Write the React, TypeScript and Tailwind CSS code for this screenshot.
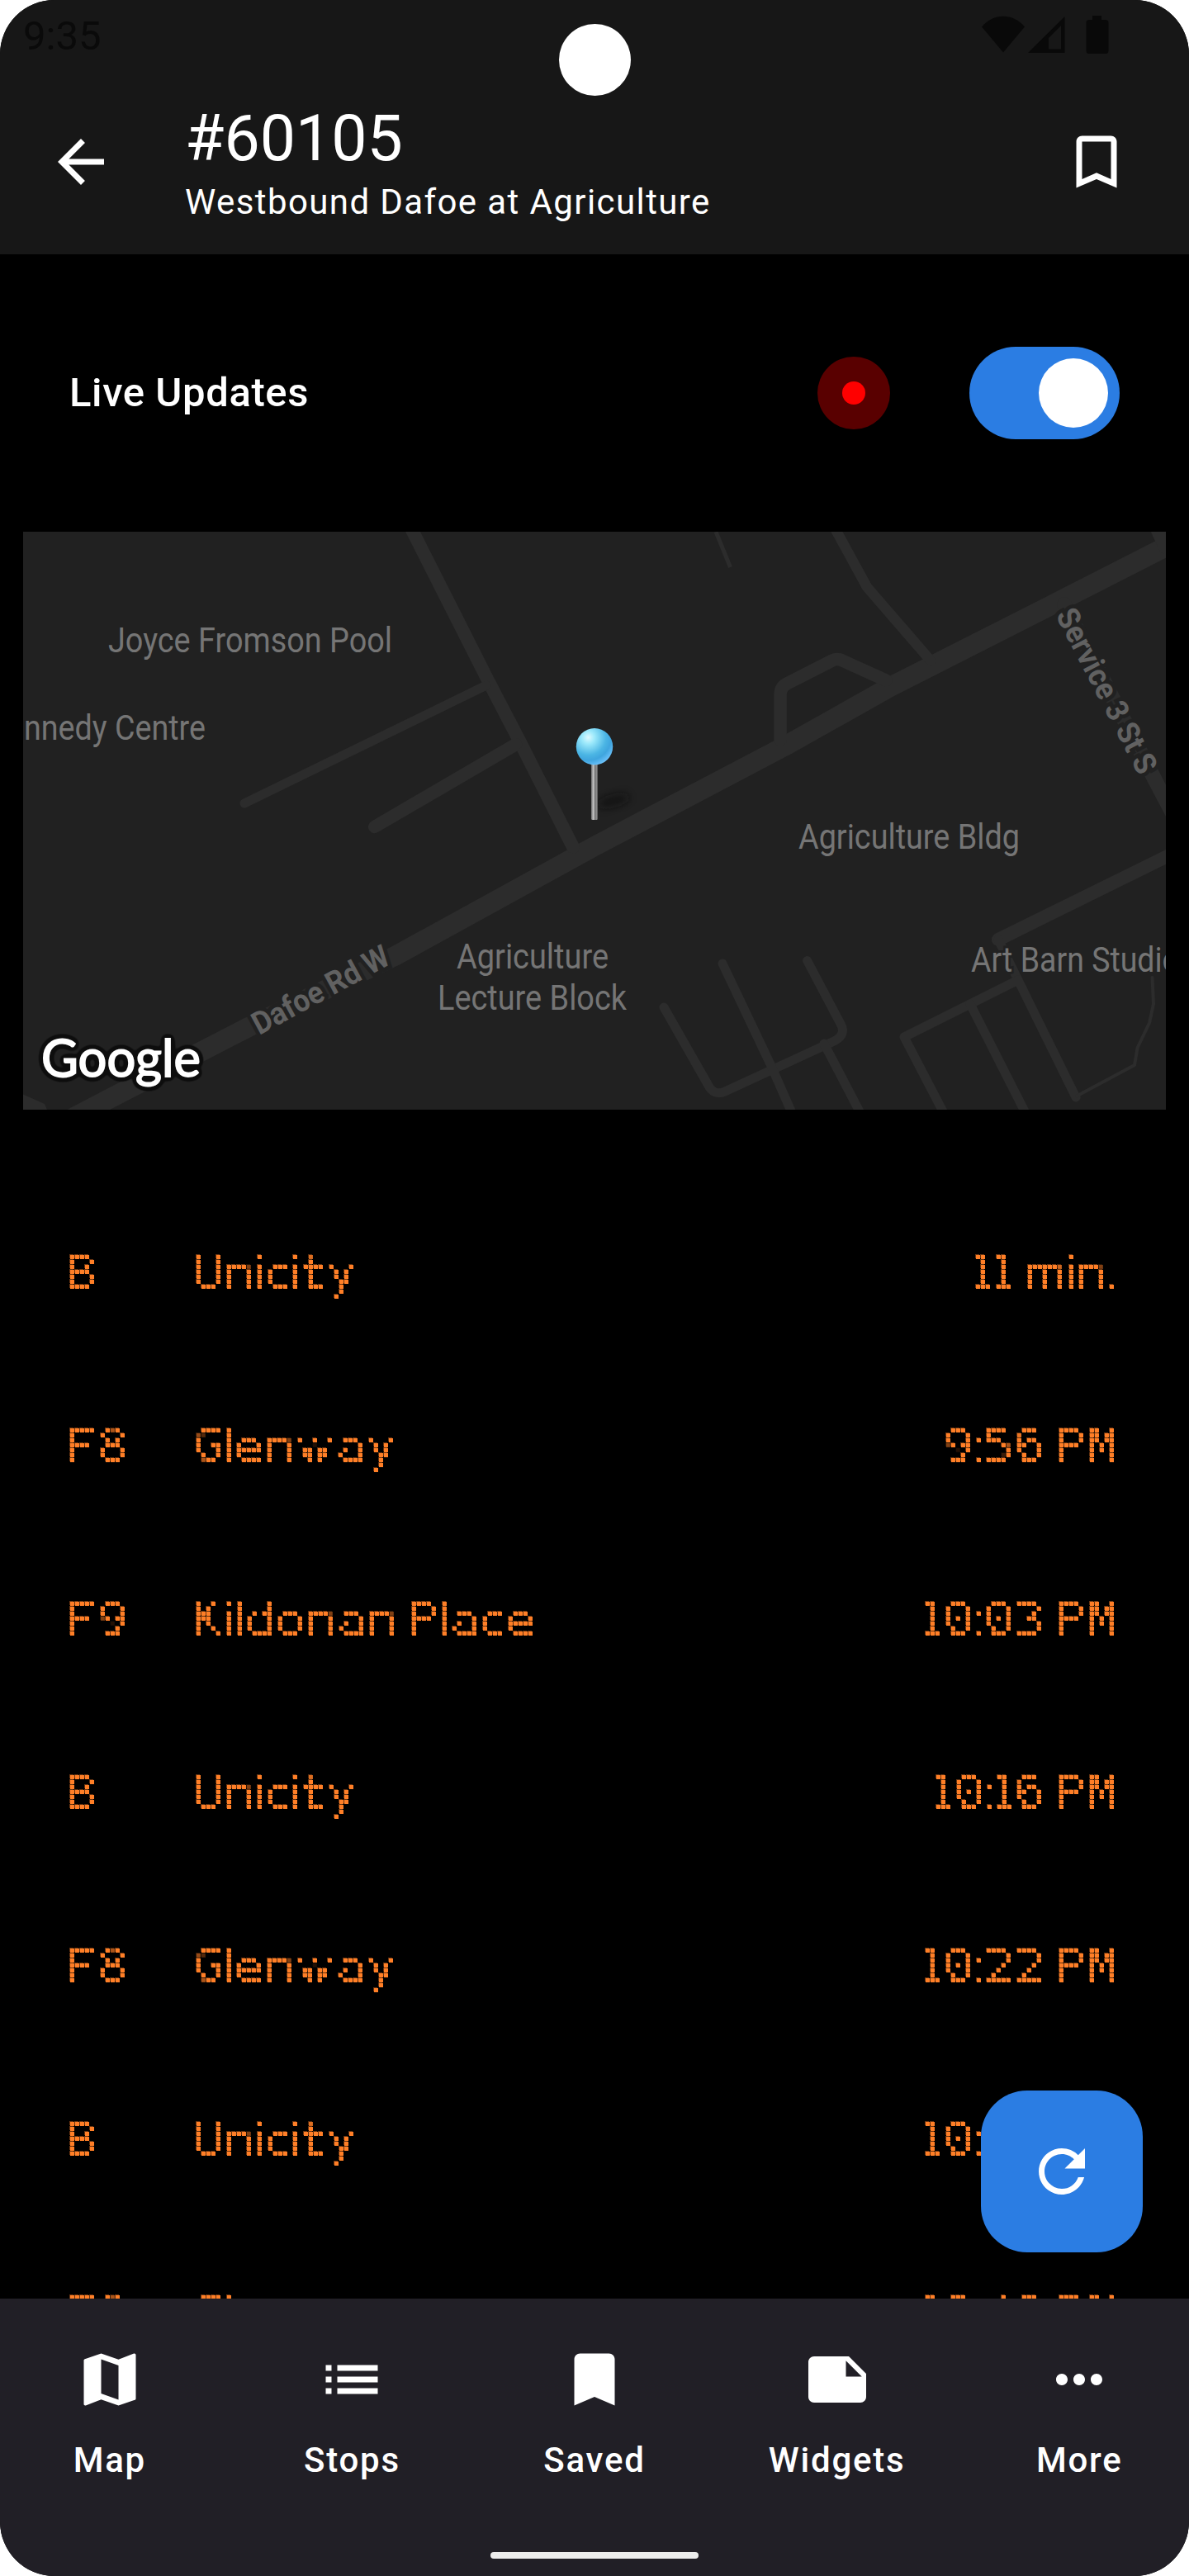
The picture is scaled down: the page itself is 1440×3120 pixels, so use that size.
import { useMemo } from "react";
import type { ReactNode } from "react";
import {
  MdArrowBack,
  MdBookmark,
  MdBookmarkBorder,
  MdList,
  MdMap,
  MdMoreHoriz,
  MdNote,
  MdRefresh,
} from "react-icons/md";

/* ---------- LED sign text ---------- */

const DOT = 6; // cell size of one lamp
const PITCH = 6.15; // average advance of one column
const LED_SIZE = 57.6; // cap height of seven lamps

type Face = "mono" | "sans" | "round" | "thinMono";

const FACES: Record<Face, { font: string; className: string }> = {
  mono: { font: `${LED_SIZE}px "DejaVu Sans Mono"`, className: "font-['DejaVu_Sans_Mono',monospace]" },
  sans: { font: `${LED_SIZE}px "DejaVu Sans"`, className: "font-['DejaVu_Sans',sans-serif]" },
  round: { font: `${LED_SIZE}px Inter`, className: "font-[Inter,sans-serif]" },
  thinMono: { font: `${LED_SIZE}px "Liberation Mono"`, className: "font-['Liberation_Mono',monospace]" },
};

// [advance in dots, inked dots, face]
const LED_METRICS: Record<string, [number, number, Face]> = {
  " ": [2.3, 1, "mono"],
  i: [2.1, 1, "sans"],
  l: [2, 1, "sans"],
  ":": [2, 1, "sans"],
  ".": [2, 1, "sans"],
  c: [5, 4, "mono"],
  t: [5, 4, "sans"],
  w: [8, 7, "round"],
  m: [8, 7, "sans"],
  M: [6, 5, "thinMono"],
  "1": [4, 3, "mono"],
};

// Samples the text once per cell and grows every lit sample to a square lamp.
function LedFilter() {
  return (
    <svg className="absolute size-0" aria-hidden="true">
      <filter
        id="led"
        filterUnits="userSpaceOnUse"
        primitiveUnits="userSpaceOnUse"
        x="-6"
        y="0"
        width="72"
        height="72"
        colorInterpolationFilters="sRGB"
      >
        <feFlood x="3" y="3" width="1" height="1" floodColor="#000" result="point" />
        <feComposite in="point" in2="point" operator="over" x="0" y="0" width="6" height="6" result="cell" />
        <feTile in="cell" result="grid" />
        <feGaussianBlur in="SourceGraphic" stdDeviation="1.1" result="smooth" />
        <feComposite in="smooth" in2="grid" operator="in" result="samples" />
        <feComponentTransfer in="samples" result="lit">
          <feFuncA type="linear" slope="20" intercept="-9" />
        </feComponentTransfer>
        <feMorphology in="lit" operator="dilate" radius="2" result="squares" />
        <feFlood floodColor="#ff7f27" result="orange" />
        <feComposite in="orange" in2="squares" operator="in" result="lamps" />
        <feOffset in="lamps" dx="-1" dy="-1" result="moved" />
        <feComponentTransfer in="moved" result="glow">
          <feFuncA type="linear" slope="0.4" />
        </feComponentTransfer>
        <feMerge>
          <feMergeNode in="glow" />
          <feMergeNode in="lamps" />
        </feMerge>
      </filter>
    </svg>
  );
}

function LedText({ text }: { text: string }) {
  const glyphs = useMemo(() => {
    const ctx = document.createElement("canvas").getContext("2d")!;
    let x = 0;
    return Array.from(text).map((ch) => {
      const [adv, ink, face] = LED_METRICS[ch] ?? [6, 5, "mono" as Face];
      const start = Math.round(x);
      x += adv * PITCH;
      const width = Math.round(x) - start;
      if (ch === " ") return { ch, width, face, style: {} };
      ctx.font = FACES[face].font;
      const m = ctx.measureText(ch);
      const base = (72 - m.fontBoundingBoxAscent - m.fontBoundingBoxDescent) / 2 + m.fontBoundingBoxAscent;
      const sx = (ink * DOT - 1) / (m.actualBoundingBoxRight + m.actualBoundingBoxLeft);
      const shift = 1 + m.actualBoundingBoxLeft * sx;
      let sy = "acemnoty".includes(ch) ? 0.95 : 1;
      if (face === "round") sy = 30 / m.actualBoundingBoxAscent;
      if (face === "thinMono") sy = 42 / m.actualBoundingBoxAscent;
      return {
        ch,
        width,
        face,
        style: {
          transformOrigin: `0 ${base}px`,
          transform: `translate(${shift}px, ${54.3 - base}px) scale(${sx}, ${sy})`,
        },
      };
    });
  }, [text]);

  return (
    <span className="flex h-[72px] text-[57.6px] leading-[72px] whitespace-pre text-[#ff7f27]">
      {glyphs.map((g, i) => (
        <span key={i} className="block h-[72px] shrink-0 [filter:url(#led)]" style={{ width: g.width }}>
          <span className={`inline-block align-top ${FACES[g.face].className}`} style={g.style}>
            {g.ch}
          </span>
        </span>
      ))}
    </span>
  );
}

/* ---------- Header ---------- */

function StatusIcons() {
  return (
    <svg width="156" height="48" viewBox="0 0 156 48" fill="#090909">
      <path d="M1 13.500C15-3.500 39-3.500 53 13.500L27 44.500Z" />
      <path fillRule="evenodd" d="M57 45L101.500 1V45ZM97 12L82 27V40.500H97Z" />
      <path d="M135 0h11v5h5a3.500 3.500 0 0 1 3.500 3.500v34a3.500 3.500 0 0 1-3.500 3.500h-20a3.500 3.500 0 0 1-3.500-3.500v-34a3.500 3.500 0 0 1 3.500-3.500h4z" />
    </svg>
  );
}

function Header() {
  return (
    <header className="relative h-[308px] shrink-0 bg-[#171717] text-white">
      <div className="flex h-[88px] items-start justify-between pr-[96px] pl-7 text-[#0a0a0a]">
        <span className="pt-[15px] text-[49px] leading-[57px]">9:35</span>
        <span className="pt-[19px]">
          <StatusIcons />
        </span>
      </div>
      <div className="absolute top-[29px] left-[677px] size-[87px] rounded-full bg-white" />
      <div className="flex h-[216px] items-center pr-[70px] pl-14">
        <MdArrowBack size={84} />
        <div className="ml-[84px] flex-1">
          <h1 className="mt-0.5 text-[77px] leading-[94px]">#60105</h1>
          <p className="mt-0.5 text-[42px] leading-[56px] tracking-[1.4px]">
            Westbound Dafoe at Agriculture
          </p>
        </div>
        <MdBookmarkBorder size={84} />
      </div>
    </header>
  );
}

/* ---------- Live updates ---------- */

function LiveUpdates() {
  return (
    <section className="flex h-[336px] shrink-0 items-center px-[84px]">
      <span className="flex-1 text-[49px] font-medium tracking-[0.6px] text-white">Live Updates</span>
      <span className="mr-24 flex size-[88px] items-center justify-center rounded-full bg-[#590000]">
        <span className="size-7 rounded-full bg-[#ff0000]" />
      </span>
      <span className="flex h-28 w-[182px] items-center justify-end rounded-full bg-[#2b7de3] pr-3.5">
        <span className="size-[84px] rounded-full bg-white" />
      </span>
    </section>
  );
}

/* ---------- Map ---------- */

function MapView() {
  const label = {
    fontSize: 42,
    fill: "#757575",
    stroke: "#212121",
    strokeWidth: 6,
    paintOrder: "stroke",
    lengthAdjust: "spacingAndGlyphs" as const,
  };
  const street = { ...label, fontSize: 38, fontWeight: 700, fill: "#616161", strokeWidth: 10 };
  return (
    <svg className="mx-7 h-[700px] w-[1384px] shrink-0 bg-[#212121]" viewBox="28 644 1384 700">
      <defs>
        <radialGradient id="ball" cx="0.33" cy="0.25" r="0.8">
          <stop offset="0" stopColor="#dffaff" />
          <stop offset="0.22" stopColor="#9ce9fb" />
          <stop offset="0.6" stopColor="#4bb5e4" />
          <stop offset="0.78" stopColor="#3fa5de" />
          <stop offset="1" stopColor="#6dc2fb" />
        </radialGradient>
        <linearGradient id="needle">
          <stop offset="0" stopColor="#6b6b6b" />
          <stop offset="0.35" stopColor="#c9c9c9" />
          <stop offset="0.6" stopColor="#6e6e6e" />
          <stop offset="0.8" stopColor="#8f8f8f" />
          <stop offset="1" stopColor="#4f4f4f" />
        </linearGradient>
        <filter id="soft" x="-50%" y="-50%" width="200%" height="200%">
          <feGaussianBlur stdDeviation="4" />
        </filter>
        <filter id="halo" x="-10%" y="-20%" width="120%" height="140%" colorInterpolationFilters="sRGB">
          <feGaussianBlur in="SourceAlpha" stdDeviation="3.5" />
          <feComponentTransfer result="wide">
            <feFuncA type="linear" slope="16" intercept="-0.6" />
          </feComponentTransfer>
          <feFlood floodColor="#0d0d0d" />
          <feComposite in2="wide" operator="in" />
          <feMerge>
            <feMergeNode />
            <feMergeNode in="SourceGraphic" />
          </feMerge>
        </filter>
      </defs>
      <g fill="none" stroke="#2c2c2c" strokeLinecap="round" strokeLinejoin="round">
        <path strokeWidth="24" d="M90 1353L161 1316L301 1244L480 1157L720 1025L950 904L1078 832L1285 727L1430 653" />
        <path strokeWidth="16" d="M496 636L592 826L629 897L694 1026" />
        <path strokeWidth="11" d="M296 973L589 830" />
        <path strokeWidth="15.500" d="M453.700 1001.400L624.500 901.700" />
        <path strokeWidth="5" strokeLinecap="butt" d="M867 644L884.500 687" />
        <path strokeWidth="12.500" d="M1009 636L1050 711L1127 800" />
        <path strokeWidth="15.500" d="M945 896V842Q945 832 953 828L1008 800Q1014 797 1020 800L1073 824" />
        <path strokeWidth="18" d="M1289 732L1399 945L1420 985" />
        <path strokeWidth="18" d="M1400 636L1412 662" />
        <path strokeWidth="16" d="M1209 1138L1420 1034" />
        <path strokeWidth="11" d="M1209 1138L1233 1187" />
        <path strokeWidth="11" d="M804 1220L857 1313Q864 1328 878 1322L1008 1262Q1026 1254 1018 1240L977.600 1163.500" />
        <path strokeWidth="11" d="M875 1167L933.500 1290L960 1350" />
        <path strokeWidth="11" d="M998 1264L1043 1350" />
        <path strokeWidth="11" d="M1144 1350L1095 1256L1233 1187L1303 1329" />
        <path strokeWidth="11" d="M1175 1216L1243 1350" />
        <path strokeWidth="4" d="M1304 1327.500L1374 1290L1377.600 1269L1392 1239L1397 1216L1395.500 1184" />
      </g>
      <path fill="#2c2c2c" d="M28 1325.600L54 1337L57 1344H28Z" />

      <text x="131" y="790" textLength="344" {...label}>Joyce Fromson Pool</text>
      <text x="29" y="896" textLength="220" {...label}>nnedy Centre</text>
      <text x="967" y="1028" textLength="268" {...label}>Agriculture Bldg</text>
      <text x="553" y="1173" textLength="184" {...label}>Agriculture</text>
      <text x="530" y="1223" textLength="229" {...label}>Lecture Block</text>
      <text x="1176" y="1177" textLength="253" {...label}>Art Barn Studio</text>
      <text textLength="183" transform="translate(314 1254) rotate(-28.5)" {...street}>Dafoe Rd W</text>
      <text textLength="220" transform="translate(1278 745) rotate(62.500)" {...street}>Service 3 St S</text>

      <text
        className="font-[Lato,sans-serif]"
        x="50"
        y="1304"
        fontSize="62"
        textLength="193"
        lengthAdjust="spacingAndGlyphs"
        fill="#ffffff"
        stroke="#ffffff"
        strokeWidth="1.8"
        filter="url(#halo)"
      >
        Google
      </text>

      <ellipse cx="743" cy="970" rx="20" ry="8" fill="#101010" opacity="0.6" filter="url(#soft)" transform="rotate(-15 743 970)" />
      <rect x="716" y="922" width="8" height="71" rx="1.500" fill="url(#needle)" />
      <circle cx="720" cy="904.300" r="22.200" fill="url(#ball)" />
    </svg>
  );
}

/* ---------- Departures ---------- */

const DEPARTURES = [
  { route: "B", name: "Unicity", time: "11 min." },
  { route: "F8", name: "Glenway", time: "9:56 PM" },
  { route: "F9", name: "Kildonan Place", time: "10:03 PM" },
  { route: "B", name: "Unicity", time: "10:16 PM" },
  { route: "F8", name: "Glenway", time: "10:22 PM" },
  { route: "B", name: "Unicity", time: "10:36 PM" },
  { route: "F8", name: "Glenway", time: "10:46 PM" },
];

function Departures() {
  return (
    <ul className="mt-[94px] flex min-h-0 flex-1 flex-col overflow-hidden">
      {DEPARTURES.map((d, i) => (
        <li key={i} className="flex h-[210px] shrink-0 items-center px-[84px]">
          <div className="w-[153px]">
            <LedText text={d.route} />
          </div>
          <div className="flex-1">
            <LedText text={d.name} />
          </div>
          <LedText text={d.time} />
        </li>
      ))}
    </ul>
  );
}

/* ---------- Bottom navigation ---------- */

const TABS: { label: string; icon: ReactNode }[] = [
  { label: "Map", icon: <MdMap size={84} /> },
  { label: "Stops", icon: <MdList size={84} /> },
  { label: "Saved", icon: <MdBookmark size={84} /> },
  { label: "Widgets", icon: <MdNote size={84} /> },
  { label: "More", icon: <MdMoreHoriz size={84} /> },
];

function BottomNav() {
  return (
    <nav className="flex h-[336px] shrink-0 flex-col items-center bg-[#211f26] text-white">
      <div className="grid h-[307px] w-full grid-cols-5 gap-7 pt-14">
        {TABS.map((t) => (
          <div key={t.label} className="flex flex-col items-center">
            {t.icon}
            <span className="mt-7 text-[42px] leading-[56px] font-medium tracking-[1.75px]">{t.label}</span>
          </div>
        ))}
      </div>
      <div className="h-2 w-[252px] rounded-full bg-[#ececec]" />
    </nav>
  );
}

export default function App() {
  return (
    <div className="h-[3120px] w-[1440px] bg-white font-[Roboto,sans-serif]">
      <LedFilter />
      <div className="relative flex h-full flex-col overflow-hidden rounded-[66px] bg-black">
        <Header />
        <LiveUpdates />
        <MapView />
        <Departures />
        <button className="absolute top-[2532px] left-[1188px] flex size-[196px] items-center justify-center rounded-[56px] bg-[#2b7de3] text-white">
          <MdRefresh size={84} />
        </button>
        <BottomNav />
      </div>
    </div>
  );
}
